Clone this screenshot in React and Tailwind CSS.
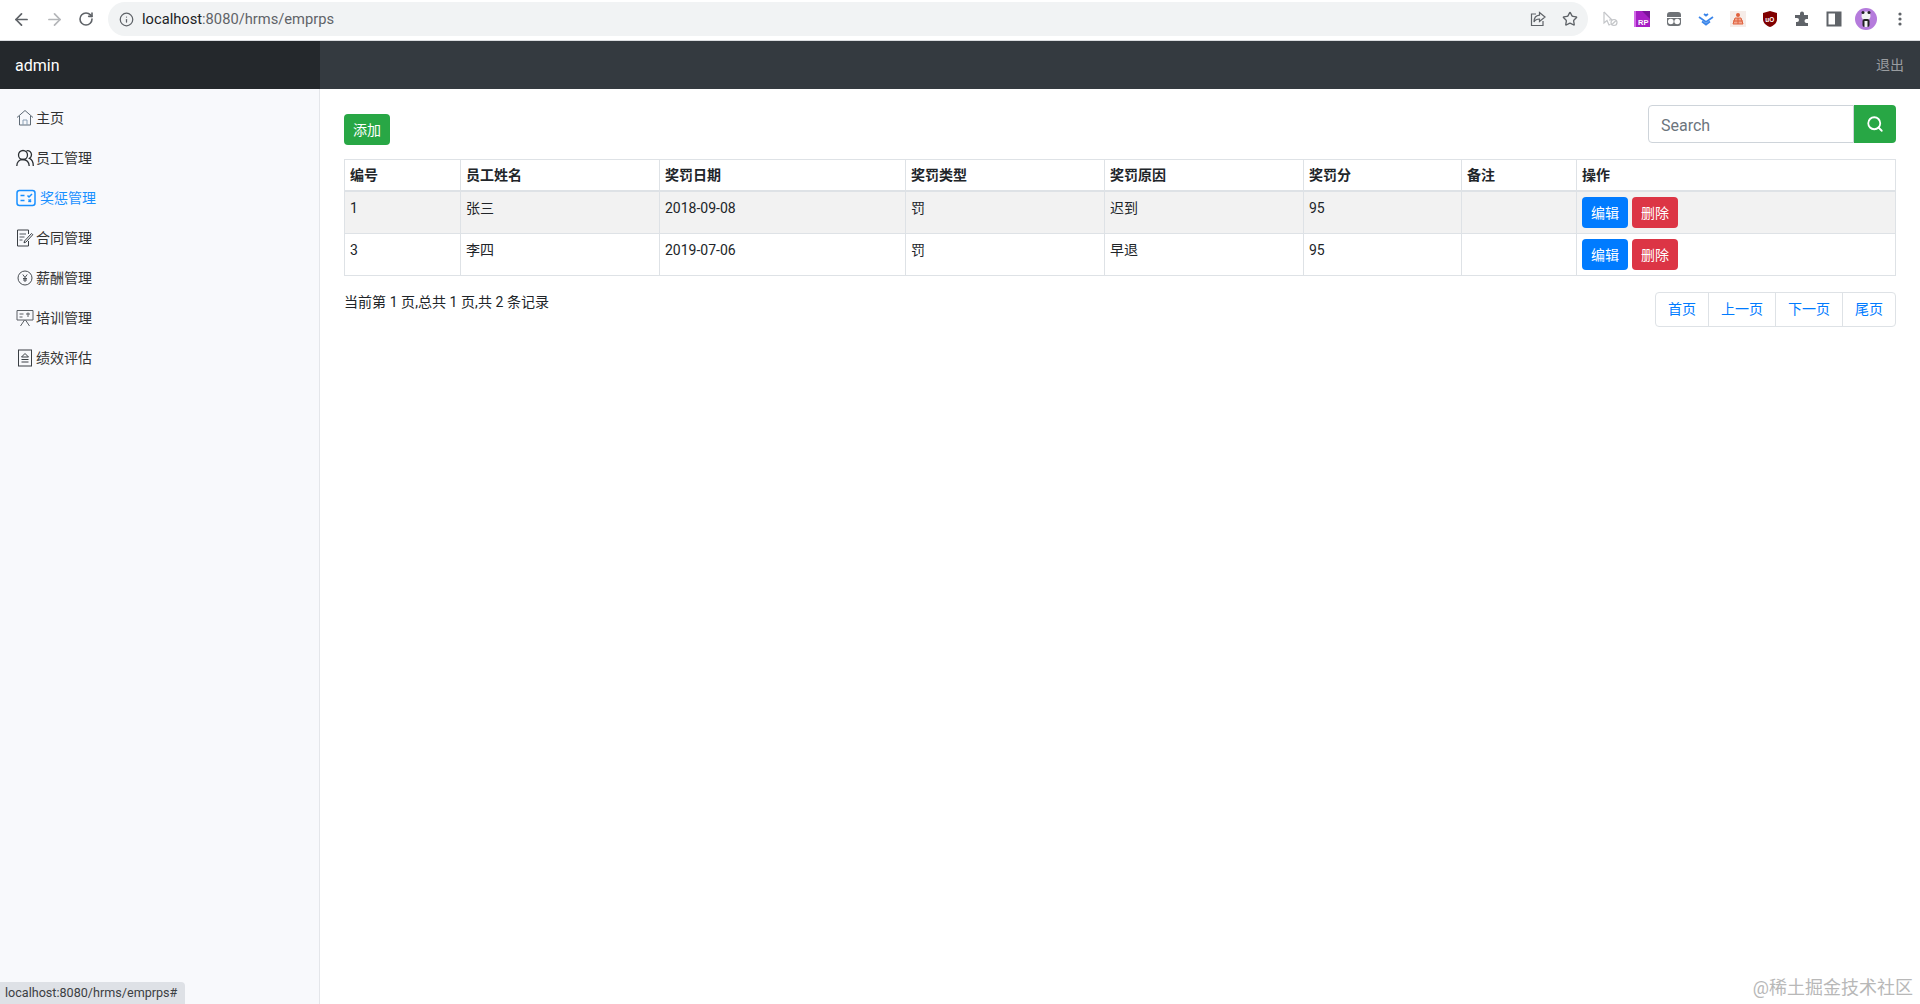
import React from 'react';
import { ArrowLeft, ArrowRight, RotateCw, Info, Star, Search } from 'lucide-react';

const HomeIcon = () => (
  <svg width="18" height="18" viewBox="0 0 18 18" fill="none" stroke="#5f6b76" strokeWidth="1">
    <path d="M1 8.500 9 1.500l8 7" />
    <path d="M3.500 7v9h11V7" />
    <path d="M7 16v-5h4v5" stroke="#8aa0b5" />
  </svg>
);

const UsersIcon = () => (
  <svg width="18" height="18" viewBox="0 0 18 18" fill="none" stroke="#2b2f33" strokeWidth="1.300">
    <circle cx="7" cy="6" r="4.500" />
    <path d="M.8 17c0-4 2.700-6.500 6.200-6.500s6.200 2.500 6.200 6.500" />
    <path d="M10.500 1.800c2.700-.6 5 1.200 5 4 0 1.600-.8 2.900-2 3.600 2 .9 3.800 3.400 3.800 7.600" />
  </svg>
);

const RewardIcon = () => (
  <svg width="20" height="18" viewBox="0 0 20 18" fill="none" stroke="#1890ff" strokeWidth="1.500">
    <rect x="1" y="1.500" width="18" height="15" rx="2.500" />
    <path d="M4.500 6.500h4M4.500 11.500h4" />
    <path d="M11.500 6.500l1.500 1.500L16 5M12.500 10.500l2.500 2.500M15 10.500l-2.500 2.500" />
  </svg>
);

const ContractIcon = () => (
  <svg width="18" height="18" viewBox="0 0 18 18" fill="none" stroke="#3a3f44" strokeWidth="1">
    <path d="M12.500 5V1H1.500v16h11v-5" />
    <path d="M3.500 5h6.500M3.500 8h5M3.500 11h3" stroke="#8a8f94" strokeWidth="1.400" />
    <path d="M8.500 12l7-7.500 1.300 1.200-7 7.500-1.800.6z" />
  </svg>
);

const SalaryIcon = () => (
  <svg width="18" height="18" viewBox="0 0 18 18" fill="none" stroke="#4a4f54" strokeWidth="1">
    <circle cx="9" cy="9" r="7" />
    <path d="M6.800 5.500 9 8.500l2.200-3M9 8.500V13M7 9.500h4M7 11h4" />
  </svg>
);

const TrainIcon = () => (
  <svg width="18" height="18" viewBox="0 0 18 18" fill="none" stroke="#5a5f64" strokeWidth="1">
    <path d="M1 1.500h16v9.500H1z" />
    <path d="M3.500 5h4M3.500 8h3M10 5h4M12 3.500V8" />
    <path d="M4.500 17l4-6M13.500 17l-4-6" />
  </svg>
);

const EvalIcon = () => (
  <svg width="18" height="18" viewBox="0 0 18 18" fill="none" stroke="#3a3f44" strokeWidth="1">
    <rect x="2.500" y="1" width="13" height="16" />
    <path d="M9 4.500l-3.500 3.500h7zM5.500 10.500h7M5.500 13h7" />
  </svg>
);

const navItems = [
  { label: '主页', icon: <HomeIcon /> },
  { label: '员工管理', icon: <UsersIcon /> },
  { label: '奖惩管理', icon: <RewardIcon />, active: true },
  { label: '合同管理', icon: <ContractIcon /> },
  { label: '薪酬管理', icon: <SalaryIcon /> },
  { label: '培训管理', icon: <TrainIcon /> },
  { label: '绩效评估', icon: <EvalIcon /> },
];

const columns = [
  { label: '编号', width: 'w-[116px]' },
  { label: '员工姓名', width: 'w-[199px]' },
  { label: '奖罚日期', width: 'w-[246px]' },
  { label: '奖罚类型', width: 'w-[199px]' },
  { label: '奖罚原因', width: 'w-[199px]' },
  { label: '奖罚分', width: 'w-[158px]' },
  { label: '备注', width: 'w-[115px]' },
  { label: '操作', width: 'w-[319px]' },
];

const rows = [
  { id: 1, name: '张三', date: '2018-09-08', type: '罚', reason: '迟到', score: 95, note: '' },
  { id: 3, name: '李四', date: '2019-07-06', type: '罚', reason: '早退', score: 95, note: '' },
];

const ChromeBar = () => (
  <div className="h-[41px] bg-white border-b border-[#dadce0] flex items-center">
    <div className="w-[108px] flex items-center shrink-0 pl-[12px] gap-[14px] -mt-[2px]">
      <ArrowLeft size={19} strokeWidth={2.200} className="text-[#5f6368]" />
      <ArrowRight size={19} strokeWidth={2.200} className="text-[#b4b6b9]" />
      <RotateCw size={16} strokeWidth={2.400} className="text-[#5f6368]" />
    </div>
    <div className="w-[1480px] h-[34px] -mt-[2px] bg-[#f1f3f4] rounded-full flex items-center pl-[11px] pr-[10px] shrink-0">
      <Info size={15} className="text-[#5f6368]" />
      <span className="ml-[8px] text-[14.7px] text-[#5f6368]">
        <span className="text-[#202124]">localhost</span>:8080/hrms/emprps
      </span>
      <div className="ml-auto flex items-center gap-[16px]">
        <svg width="16" height="16" viewBox="0 0 16 16" fill="none" stroke="#5f6368" strokeWidth="1.200">
          <path d="M6 3H1.500v11.500H13V10" />
          <path d="M9.500 1.500 15 6l-5.500 4.500V8C7 8 5 9 4 11c0-4 2-6.500 5.500-6.800z" />
        </svg>
        <Star size={16} strokeWidth={2} className="text-[#5f6368]" />
      </div>
    </div>
    <div className="flex items-center flex-1 pl-[14px] gap-[16px] -mt-[2px]">
      <svg width="16" height="16" viewBox="0 0 16 16" fill="none" stroke="#c4c6c9" strokeWidth="1.200">
        <path d="M2 1v11l3-2.500 2 4.500 1.500-.7" />
        <path d="M2 1l8 8H7" />
        <circle cx="12" cy="11.500" r="3" />
        <path d="M10 13.500l4-4" />
      </svg>
      <svg width="16" height="16" viewBox="0 0 16 16">
        <rect width="16" height="16" fill="#a61fc4" />
        <rect x="0" width="2" height="16" fill="#d26be8" />
        <path d="M8 0h8v8z" fill="#7a1399" />
        <text x="4" y="14" fontSize="7.500" fontWeight="700" fill="#ffffff" fontFamily="Liberation Sans, sans-serif">RP</text>
      </svg>
      <svg width="16" height="16" viewBox="0 0 16 16">
        <rect x="1" y="1" width="14" height="14" rx="3" fill="#6f7377" />
        <circle cx="4.800" cy="10.500" r="2.800" fill="#ffffff" />
        <circle cx="11.200" cy="10.500" r="2.800" fill="#ffffff" />
        <rect x="1" y="6" width="14" height="1" fill="#ffffff" />
      </svg>
      <svg width="16" height="16" viewBox="0 0 16 16" fill="none" stroke="#3b86ea" strokeWidth="1.800">
        <path d="M1 6l7 5 7-5M4 10.500l4 3 4-3" />
        <path d="M6 3l2 1.500L10 3" />
      </svg>
      <svg width="16" height="16" viewBox="0 0 16 16">
        <rect width="16" height="16" fill="#f6ece8" />
        <circle cx="8" cy="4" r="2" fill="#e0603c" />
        <path d="M3 13l2-6h6l2 6z" fill="#f2a58e" stroke="#e0603c" strokeWidth="1" />
        <path d="M3 10h10M8 7v6" stroke="#e0603c" />
      </svg>
      <svg width="16" height="16" viewBox="0 0 16 16">
        <path d="M8 0l7 2v6c0 4-3 6.500-7 8-4-1.500-7-4-7-8V2z" fill="#800000" />
        <text x="3.300" y="10.500" fontSize="6.500" fontWeight="700" fill="#ffffff" fontFamily="Liberation Sans, sans-serif">uO</text>
      </svg>
      <svg width="16" height="16" viewBox="0 0 16 16" fill="#5f6368">
        <path d="M6 2.500a2 2 0 0 1 4 0V4h4v4h-1.500a2 2 0 0 0 0 4H14v3H2v-4h1a2 2 0 0 0 0-4H1V4h5z" />
      </svg>
      <svg width="16" height="16" viewBox="0 0 16 16" fill="none" stroke="#5f6368" strokeWidth="2">
        <rect x="1.500" y="1.500" width="13" height="13" />
        <rect x="10" y="2" width="4" height="12" fill="#5f6368" />
      </svg>
      <svg width="22" height="22" viewBox="0 0 22 22" className="-ml-[3px]">
        <circle cx="11" cy="11" r="11" fill="#b57bdc" />
        <circle cx="11" cy="8" r="4.500" fill="#f2f2f2" />
        <circle cx="8" cy="4.500" r="1.500" fill="#222222" />
        <circle cx="14" cy="4.500" r="1.500" fill="#222222" />
        <rect x="7.500" y="11" width="7" height="8" rx="2" fill="#222222" />
        <rect x="9.500" y="13" width="3" height="6" fill="#f2f2f2" />
      </svg>
      <svg width="4" height="16" viewBox="0 0 4 16" fill="#5f6368" className="ml-[5px]">
        <circle cx="2" cy="3" r="1.600" />
        <circle cx="2" cy="8" r="1.600" />
        <circle cx="2" cy="13" r="1.600" />
      </svg>
    </div>
  </div>
);

const PageLink = ({ children }) => (
  <a href="#" className="px-3 h-[35px] leading-[33px] text-sm text-[#007bff] border border-[#dee2e6] -ml-px first:ml-0 first:rounded-l last:rounded-r">
    {children}
  </a>
);

const App = () => {
  return (
    <div className="relative h-screen flex flex-col overflow-hidden bg-white text-[#212529] font-['Roboto','Noto_Sans_CJK_SC',sans-serif]">
      <ChromeBar />

      <header className="h-12 flex items-center bg-[#343a40] shrink-0">
        <div className="w-[320px] h-full flex items-center px-[15px] pt-px bg-[#24282c] text-white text-base">admin</div>
        <a href="#" className="ml-auto pr-4 text-sm text-[#9a9da0]">退出</a>
      </header>

      <div className="flex flex-1 min-h-0">
        <aside className="w-[320px] shrink-0 bg-[#f8f9fc] border-r border-[#e4e6ea] pt-[9px]">
          {navItems.map((item) => (
            <a
              key={item.label}
              href="#"
              className={`h-10 flex items-center pl-4 gap-[2px] text-sm ${item.active ? 'text-[#1890ff]' : 'text-[#333333]'}`}
            >
              {item.icon}
              <span className={item.active ? 'ml-[2px]' : ''}>{item.label}</span>
            </a>
          ))}
        </aside>

        <main className="flex-1 min-w-0 pt-4 pl-6 pr-6">
          <div className="flex justify-between items-start">
            <button className="mt-[9px] w-[46px] h-[31px] bg-[#28a745] text-white text-sm rounded">添加</button>
            <div className="flex">
              <input
                placeholder="Search"
                className="w-[206px] h-[38px] px-3 pt-[3px] border border-[#ced4da] rounded-l bg-white text-base placeholder:text-[#6c757d] outline-none"
              />
              <button className="w-[42px] h-[38px] bg-[#28a745] rounded-r flex items-center justify-center">
                <Search size={18} strokeWidth={2.400} className="text-white" />
              </button>
            </div>
          </div>

          <table className="mt-[14px] w-[1551px] table-fixed border-collapse border border-[#dee2e6] text-sm">
            <thead>
              <tr>
                {columns.map((col) => (
                  <th key={col.label} className={`${col.width} p-[5px] text-left font-bold border border-[#dee2e6] border-b-2`}>
                    {col.label}
                  </th>
                ))}
              </tr>
            </thead>
            <tbody>
              {rows.map((row, i) => (
                <tr key={row.id} className={i === 0 ? 'bg-[#f2f2f2]' : ''}>
                  <td className="px-[5px] pt-[6px] align-top border border-[#dee2e6]">{row.id}</td>
                  <td className="px-[5px] pt-[6px] align-top border border-[#dee2e6]">{row.name}</td>
                  <td className="px-[5px] pt-[6px] align-top border border-[#dee2e6]">{row.date}</td>
                  <td className="px-[5px] pt-[6px] align-top border border-[#dee2e6]">{row.type}</td>
                  <td className="px-[5px] pt-[6px] align-top border border-[#dee2e6]">{row.reason}</td>
                  <td className="px-[5px] pt-[6px] align-top border border-[#dee2e6]">{row.score}</td>
                  <td className="px-[5px] pt-[6px] align-top border border-[#dee2e6]">{row.note}</td>
                  <td className="p-[5px] align-top border border-[#dee2e6]">
                    <div className="flex gap-[4px]">
                      <button className="w-[46px] h-[31px] bg-[#007bff] text-white text-sm rounded">编辑</button>
                      <button className="w-[46px] h-[31px] bg-[#dc3545] text-white text-sm rounded">删除</button>
                    </div>
                  </td>
                </tr>
              ))}
            </tbody>
          </table>

          <div className="mt-4 flex justify-between items-start">
            <span className="text-sm leading-[21px] tracking-[0.05px]">当前第 1 页,总共 1 页,共 2 条记录</span>
            <nav className="flex">
              <PageLink>首页</PageLink>
              <PageLink>上一页</PageLink>
              <PageLink>下一页</PageLink>
              <PageLink>尾页</PageLink>
            </nav>
          </div>
        </main>
      </div>

      <div className="absolute left-0 bottom-0 h-[22px] w-[185px] pl-[5px] pt-px flex items-center bg-[#dee1e6] rounded-tr text-[12.6px] text-[#3c4043]">
        localhost:8080/hrms/emprps#
      </div>
      <div className="absolute right-[7px] bottom-[5px] text-lg leading-[22px] text-[#b8b8b8]">@稀土掘金技术社区</div>
    </div>
  );
};

export default App;
